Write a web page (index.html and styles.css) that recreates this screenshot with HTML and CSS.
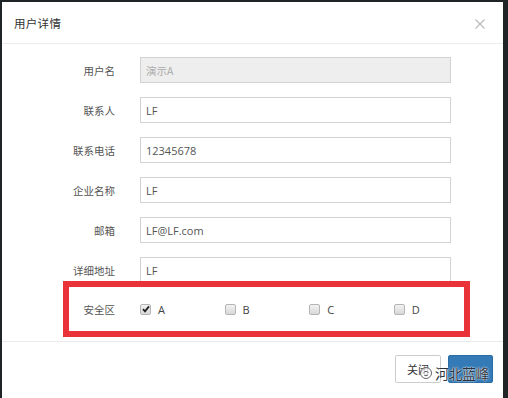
FILE: index.html
```html
<!DOCTYPE html>
<html lang="zh">
<head>
<meta charset="utf-8">
<title>用户详情</title>
<link rel="stylesheet" href="styles.css">
</head>
<body>
<div class="modal">
  <div class="modal-header">
    <h4 class="modal-title">用户详情</h4>
    <span class="close" aria-label="关闭">
      <svg width="10" height="10" viewBox="0 0 10 10"><path d="M0.5 0.5 L9.5 9.5 M9.5 0.5 L0.5 9.5" stroke="#bdbdbd" stroke-width="1.3" fill="none"/></svg>
    </span>
  </div>
  <div class="modal-body">
    <div class="row"><label>用户名</label><div class="input disabled">演示A</div></div>
    <div class="row"><label>联系人</label><div class="input">LF</div></div>
    <div class="row"><label>联系电话</label><div class="input">12345678</div></div>
    <div class="row"><label>企业名称</label><div class="input">LF</div></div>
    <div class="row"><label>邮箱</label><div class="input">LF@LF.com</div></div>
    <div class="row"><label>详细地址</label><div class="input">LF</div></div>
    <div class="row check-row"><label>安全区</label>
      <div class="options">
        <span class="opt"><span class="cb checked"><svg width="8" height="8" viewBox="0 0 8 8"><path d="M1 4.2 L3 6.4 L7 1.4" stroke="#222" stroke-width="1.8" fill="none"/></svg></span>A</span>
        <span class="opt"><span class="cb"></span>B</span>
        <span class="opt"><span class="cb"></span>C</span>
        <span class="opt"><span class="cb"></span>D</span>
      </div>
    </div>
  </div>
  <div class="annot"></div>
  <div class="modal-footer">
    <button class="btn btn-default">关闭</button>
    <button class="btn btn-primary" aria-label="保存"></button>
  </div>
  <div class="watermark">
    <svg width="14" height="14" viewBox="0 0 14 14"><circle cx="7" cy="7" r="5.5" stroke="#666" stroke-width="1" fill="#fff" fill-opacity="0.7"/><path d="M4.5 6.5 Q7 4 9.5 6.5 M5 9 Q7 10.5 9 9" stroke="#666" stroke-width="1" fill="none"/></svg>
    <span>河北蓝峰</span>
  </div>
</div>
</body>
</html>
```
FILE: styles.css
```css
html, body {
  margin: 0;
  padding: 0;
  height: 100%;
  overflow: hidden;
}
body {
  background: #1f2526;
  font-family: "Noto Sans CJK SC", "Open Sans", sans-serif;
  padding: 2px 5px 0 2px;
  box-sizing: border-box;
}
.modal {
  position: relative;
  background: #fff;
  height: 396px;
  width: 501px;
}
.modal-header {
  height: 41px;
  border-bottom: 1px solid #ececec;
  display: flex;
  align-items: center;
  justify-content: space-between;
  padding: 0 18px 0 12px;
}
.modal-title {
  margin: 0;
  font-size: 11.5px;
  font-weight: normal;
  color: #333;
  letter-spacing: 0.3px;
}
.close {
  display: flex;
  margin-top: 2px;
}
.modal-body {
  padding: 13px 0 0 0;
  display: flex;
  flex-direction: column;
  gap: 14px;
  height: 297px;
  box-sizing: border-box;
}
.row {
  display: grid;
  grid-template-columns: 113px 311px;
  column-gap: 25px;
  align-items: center;
  height: 26px;
}
.row label {
  text-align: right;
  font-size: 10.5px;
  color: #555;
}
.input {
  height: 26px;
  box-sizing: border-box;
  border: 1px solid #d2d2d2;
  padding: 0 5px;
  display: flex;
  align-items: center;
  font-family: "Open Sans", "Noto Sans CJK SC", sans-serif;
  font-size: 11px;
  color: #555;
}
.input.disabled {
  background: #eee;
  color: #aaa;
  font-family: "Noto Sans CJK SC", sans-serif;
  font-size: 10.5px;
}
.check-row {
  height: 24px;
}
.options {
  display: grid;
  grid-template-columns: repeat(4, 84.6px);
}
.opt {
  display: flex;
  align-items: center;
  gap: 7px;
  font-family: "Open Sans", sans-serif;
  font-size: 11px;
  color: #444;
}
.cb {
  width: 9px;
  height: 9px;
  border: 1px solid #b5b5b5;
  border-radius: 2px;
  background: linear-gradient(#f2f2f2, #d8d8d8);
  display: flex;
  align-items: center;
  justify-content: center;
}
.annot {
  position: absolute;
  left: 61px;
  top: 279px;
  width: 395px;
  height: 44px;
  border: 6px solid #ea3339;
}
.modal-footer {
  border-top: 1px solid #eaeaea;
  padding: 13px 10px 0 0;
  display: flex;
  justify-content: flex-end;
  gap: 7px;
}
.btn {
  height: 28px;
  font-family: "Noto Sans CJK SC", sans-serif;
  font-size: 11px;
  border-radius: 2px;
  padding: 0;
  width: 46px;
}
.btn-default {
  background: #fff;
  border: 1px solid #ccc;
  color: #333;
}
.btn-primary {
  background: #337ab7;
  border: 1px solid #2e6da4;
  color: #fff;
  width: 45px;
}
.watermark {
  position: absolute;
  left: 417px;
  top: 361px;
  display: flex;
  align-items: center;
  gap: 2px;
}
.watermark span {
  font-family: "Noto Sans CJK SC", sans-serif;
  font-size: 14px;
  color: #2a3440;
  letter-spacing: -0.5px;
  text-shadow: 0 0 2px #fff, 0 0 1px #fff;
}
```
